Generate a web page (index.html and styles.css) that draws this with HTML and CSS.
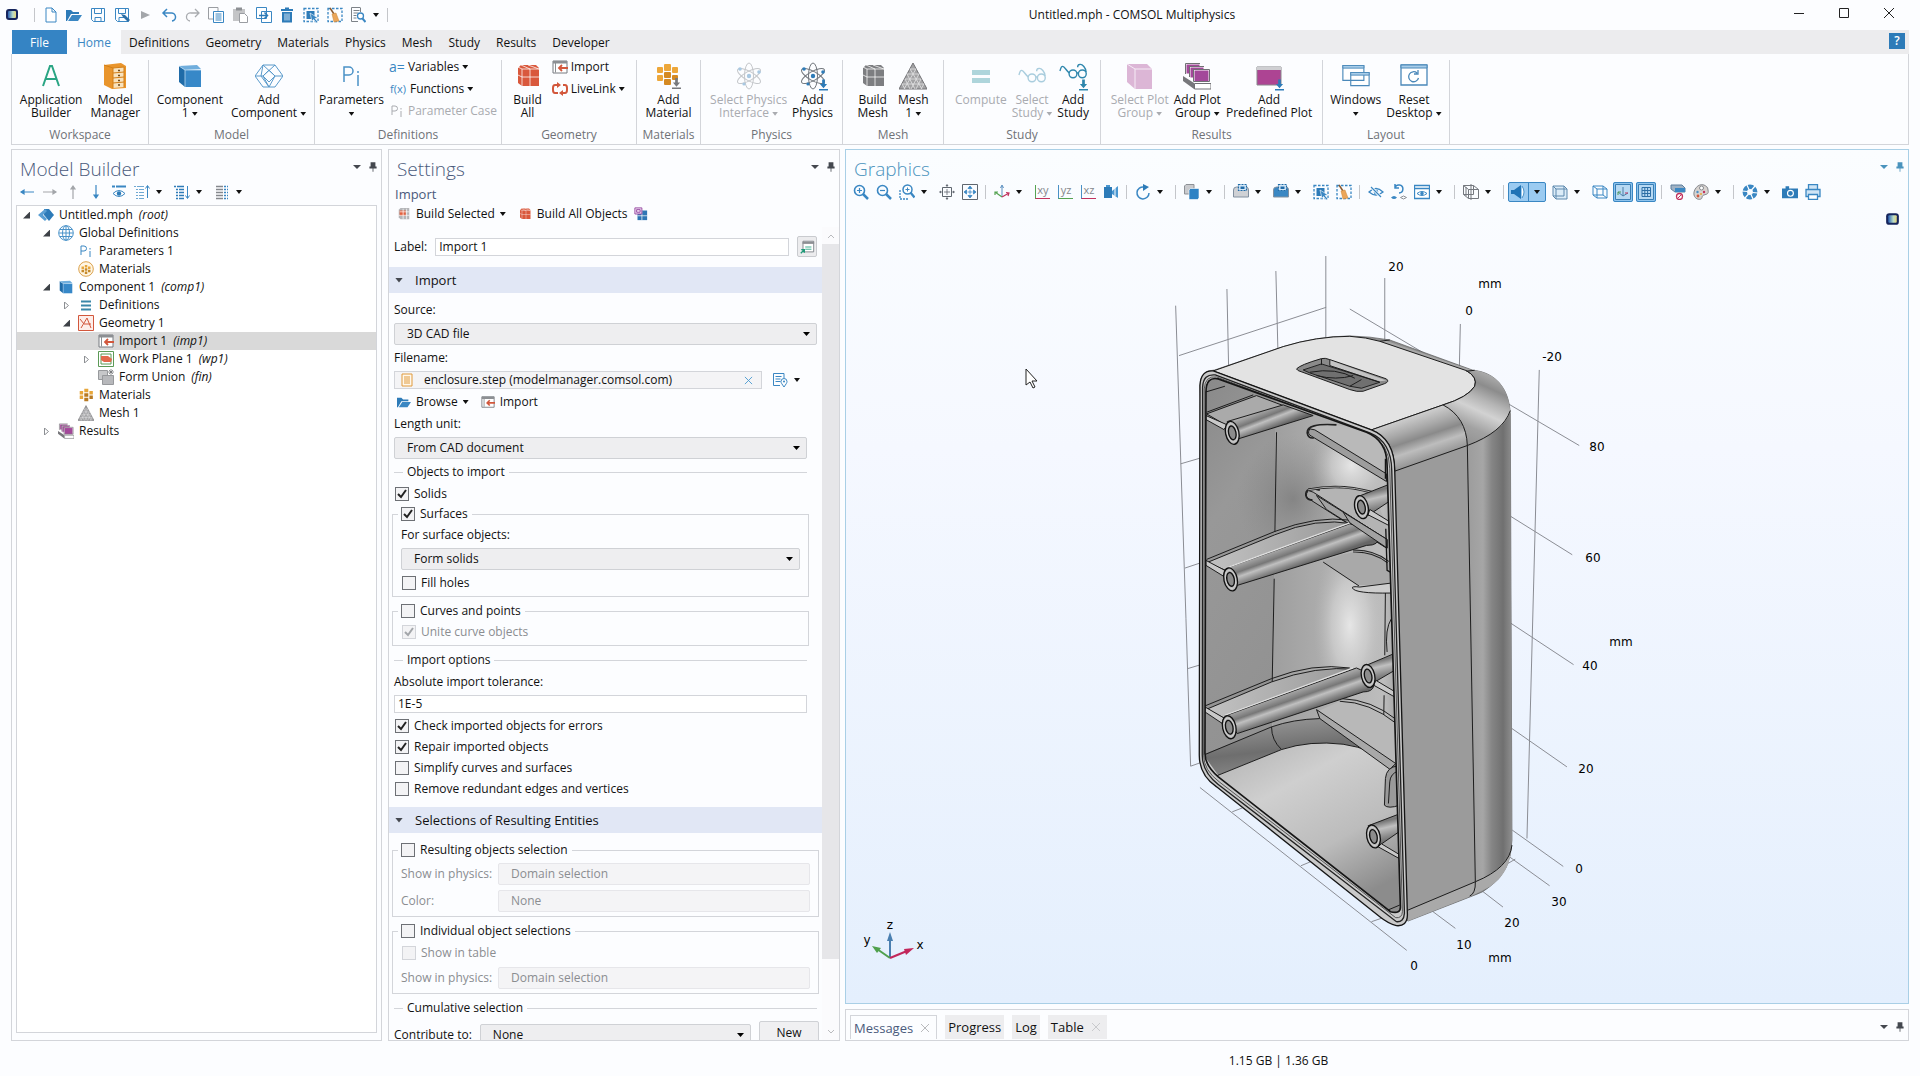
FILE: index.html
```html
<!doctype html>
<html lang="en">
<head>
    <meta charset="utf-8">
    <meta name="viewport" content="width=device-width, initial-scale=1">
    <title>Untitled.mph - COMSOL Multiphysics</title>
    <link rel="stylesheet" href="styles.css">
</head>
<body>

<!-- Icon sprite -->
<svg class="sprite" aria-hidden="true">
    <defs>
        <linearGradient id="logo-fill" x1="0" x2="1"><stop offset="0" stop-color="#2b62b5"/><stop offset=".6" stop-color="#b9dcc8"/><stop offset="1" stop-color="#e8d67a"/></linearGradient>
    </defs>
    <symbol id="i-logo" viewBox="0 0 16 16"><rect x="2" y="2" width="12" height="11" rx="3" fill="#16255c"/><rect x="4" y="4" width="8" height="7" rx="1" fill="url(#logo-fill)"/></symbol>
    <symbol id="i-new" viewBox="0 0 16 16"><path d="M3 1h6l4 4v10H3zM9 1v4h4" fill="#fff" stroke="#3a87c3"/></symbol>
    <symbol id="i-open" viewBox="0 0 16 16"><path d="M0 3h5l2 2h6v2H5L1 14H0z" fill="#2d7bb8"/><path d="M6 8h10l-4 6H2z" fill="#3a87c3"/></symbol>
    <symbol id="i-save" viewBox="0 0 16 16"><path d="M1.5 1.5h13v13h-11l-2-2zM4.500 1.500v5h7v-5M5 14.500v-4h6v4" fill="none" stroke="#3a87c3"/></symbol>
    <symbol id="i-saveas" viewBox="0 0 16 16"><path d="M1.500 1.500h13v13h-11l-2-2zM4.500 1.500v5h7v-5M5 14.500v-4h5" fill="none" stroke="#3a87c3"/><path d="M7 7l2 3 5 5 2-2-5-5z" fill="#2d6fa6"/></symbol>
    <symbol id="i-play" viewBox="0 0 16 16"><path d="M4 4l9 4-9 4z" fill="#a3a6aa"/></symbol>
    <symbol id="i-undo" viewBox="0 0 16 16"><path d="M2 6h8a4 4 0 0 1 1 8M6 2L2 6l4 4" fill="none" stroke="#3a87c3" stroke-width="1.500"/></symbol>
    <symbol id="i-redo" viewBox="0 0 16 16"><path d="M14 6H6a4 4 0 0 0-1 8M10 2l4 4-4 4" fill="none" stroke="#a9acb0" stroke-width="1.300"/></symbol>
    <symbol id="i-copy" viewBox="0 0 16 16"><path d="M5 12H.500V.500H10V4" fill="none" stroke="#9a9da2"/><path d="M5.500 4.500h10v11h-10zM7.500 7h6M7.500 9h6M7.500 11h6M7.500 13h6" fill="#fff" stroke="#3a87c3"/></symbol>
    <symbol id="i-paste" viewBox="0 0 16 16"><path d="M1 2h12v12H1z" fill="#c4c5c7"/><path d="M4 .500h6v3H4z" fill="#8c8f93"/><path d="M7.500 6.500h5l3 3v6h-8z" fill="#fff" stroke="#9a9da2"/></symbol>
    <symbol id="i-dup" viewBox="0 0 16 16"><path d="M.500.500h10v11H.500zM5.500 4.500h10v11h-10z" fill="#fff" stroke="#3a87c3"/><path d="M3 8.500h8M8.500 5.500l3 3-3 3" fill="none" stroke="#2d7bb8" stroke-width="1.500"/></symbol>
    <symbol id="i-trash" viewBox="0 0 16 16"><path d="M2 2h4V.500h4V2h4v2H2zM3 5h10v10.500H3z" fill="#2d7bb8"/><path d="M6 6.500v7M8 6.500v7M10 6.500v7" stroke="#cfe2f2"/></symbol>
    <symbol id="i-select" viewBox="0 0 16 16"><path d="M1 1.500h14v13H1z" fill="none" stroke="#3a87c3" stroke-width="1.300" stroke-dasharray="2.500 1.500"/><path d="M3.500 4h8v8h-8z" fill="#2d7bb8"/><path d="M7 6l8 5-3 .500 3 3.500-1.500 1-3-3.500-1.500 2z" fill="#3a87c3" stroke="#fff" stroke-width=".600"/></symbol>
    <symbol id="i-clear" viewBox="0 0 16 16"><path d="M1 1.500h14v13H1z" fill="none" stroke="#3a87c3" stroke-width="1.300" stroke-dasharray="2.500 1.500"/><path d="M3 1l4 6" stroke="#8a5a30" stroke-width="1.500"/><path d="M5 7l4-1 3 8-5 1z" fill="#eba65a" stroke="#c98436" stroke-width=".500"/></symbol>
    <symbol id="i-find" viewBox="0 0 16 16"><path d="M10 .500H1.500v14H8M3.500 3.500h6M3.500 6h5M3.500 8.500h3M3.500 11h3M10.500.500V5" fill="none" stroke="#7d8288"/><circle cx="10.500" cy="9" r="3" fill="#fff" stroke="#3a87c3" stroke-width="1.300"/><path d="M12.500 11.500l3 3.500" stroke="#3a87c3" stroke-width="2"/></symbol>

    <symbol id="i-app" viewBox="0 0 28 28"><path d="M6 24L13 4h2l7 20M9 17h10" fill="none" stroke="#2aa584" stroke-width="2"/></symbol>
    <symbol id="i-manager" viewBox="0 0 28 28"><path d="M3 3l17-2 5 3v22l-14 1-8-4z" fill="#e9952c"/><path d="M12 6l11-1v20l-11 1z" fill="#f8e2bd"/><path d="M12 11l11-1M12 16l11-1M12 21l11-1M12 6v20M23 5v20M3 3l9 3 11-1" fill="none" stroke="#d37f17"/><path d="M17 8.500h2M17 13.500h2M17 18.500h2M17 23h2" stroke="#6b4a1c" stroke-width="1.500"/></symbol>
    <symbol id="i-component" viewBox="0 0 28 28"><path d="M3 4l18-1 4 4-16 1z" fill="#70aedd"/><path d="M3 4l6 4v17l-6-5z" fill="#1f6ba8"/><path d="M9 8h16v17H9z" fill="#3788c8"/><path d="M3 4l6 4h16M9 8v17" fill="none" stroke="#b9daf2" stroke-width=".800"/></symbol>
    <symbol id="i-addcomp" viewBox="0 0 28 28"><path d="M8 3h12l8 11-8 11H8L0 14zM8 3l12 11M8 3l-2 11 8 11M20 3L8 14H0M20 14h8M20 14l-6 11M8 14l6 11M14 8l6 6-6 6-6-6z" fill="none" stroke="#5a9acb" stroke-width="1"/></symbol>
    <symbol id="i-pi" viewBox="0 0 28 28"><path d="M7 20V5h5a4 4 0 0 1 0 8H7" fill="none" stroke="#4a91c6" stroke-width="1.500"/><path d="M21 13v11M21 9v2" stroke="#4a91c6" stroke-width="1.500"/></symbol>
    <symbol id="i-pis" viewBox="0 0 16 16"><path d="M3 12V3h3a2 2 0 0 1 0 5H3M12 8v6M12 5v1.500" fill="none" stroke="currentColor"/></symbol>
    <symbol id="i-cube" viewBox="0 0 28 28"><path d="M4 6l3-3h15l3 3v18H8l-4-3z" fill="currentColor"/><path d="M8 7h17M8 7v17M8 7L4 5M8 15h17M16 7v17M4 13l4 2M7 3l9 4M14 3l11 4" fill="none" stroke="#fff" stroke-opacity=".750" stroke-width="1"/></symbol>
    <symbol id="i-import" viewBox="0 0 16 16"><path d="M1 2h14v12H1z" fill="#fff" stroke="#777b80"/><path d="M1 2h14v2.500H1zM3 4.500h1v9H3z" fill="#8c8f93"/><path d="M16 9H7M10 6L7 9l3 3" fill="none" stroke="#d2573c" stroke-width="1.800"/></symbol>
    <symbol id="i-link" viewBox="0 0 16 16"><path d="M6 4H3Q1 4 1 7v2q0 3 2 3h3M10 12h3q2 0 2-3V7q0-3-2-3h-2" fill="none" stroke="#d2573c" stroke-width="2"/><path d="M5 1l4 3-4 3zM11 9l-4 3 4 3z" fill="#d2573c"/></symbol>
    <symbol id="i-material" viewBox="0 0 28 28"><g fill="#eda73a"><rect x="3" y="5" width="6" height="6" rx="1"/><rect x="10" y="2" width="7" height="7" rx="1"/><rect x="18" y="5" width="6" height="6" rx="1"/><rect x="3" y="13" width="6" height="6" rx="1"/></g><g fill="#d58a22"><rect x="10" y="10" width="7" height="6" rx="1"/><rect x="18" y="13" width="6" height="5" rx="1"/><rect x="10" y="17" width="7" height="6" rx="1"/></g></symbol>
    <symbol id="i-matsmall" viewBox="0 0 28 28"><g fill="#e7a63a"><path d="M3 7h6v6H3zM11 3h7v6h-7zM20 7h6v6h-6zM3 15h6v6H3z"/></g><g fill="#b87a22"><path d="M11 11h7v6h-7zM20 15h6v6h-6zM11 19h7v6h-7z"/></g></symbol>
    <symbol id="i-matring" viewBox="0 0 16 16"><circle cx="8" cy="8" r="7.300" fill="#fff6e4" stroke="#dba14b"/><path d="M3.500 5.500h2.500v2.500H3.500zM6.800 4h2.500v2.500H6.800zM10 5.500h2.500v2.500H10z" fill="#e7a63a"/><path d="M3.500 8.800h2.500v2.500H3.500zM6.800 7.300h2.500v2.500H6.800zM10 8.800h2.500v2.500H10zM6.800 10.500h2.500V13H6.800z" fill="#c58a2b"/></symbol>
    <symbol id="i-atom" viewBox="0 0 28 28"><g fill="none" stroke="#73787e" stroke-width="1"><ellipse cx="14" cy="14" rx="4.500" ry="13"/><ellipse cx="14" cy="14" rx="4.500" ry="13" transform="rotate(60 14 14)"/><ellipse cx="14" cy="14" rx="4.500" ry="13" transform="rotate(-60 14 14)"/></g><g fill="#2d7bb8"><circle cx="14" cy="14" r="2.200"/><circle cx="5" cy="7" r="1.800"/><circle cx="24" cy="10" r="1.800"/><circle cx="9" cy="22" r="1.600"/></g></symbol>
    <symbol id="i-down" viewBox="0 0 10 12"><path d="M3.500 0h3v5H9L5 9.500 1 5h2.500zM0 10.500h10V12H0z" fill="currentColor"/></symbol>
    <symbol id="i-mesh" viewBox="0 0 28 28"><path d="M14 1L28 27H0z" fill="#a3a3a5" stroke="#737376"/><path d="M11 7h6M8 12h12M6 17h16M3 22h22M11 7l12 20M8 12l8 15M6 17l5 10M3 22l3 5M17 7L5 27M20 12l-8 15M22 17l-5 10M25 22l-3 5" fill="none" stroke="#e3e3e5" stroke-width=".800"/></symbol>
    <symbol id="i-equals" viewBox="0 0 28 28"><path d="M5 8h18v5H5zM5 16h18v5H5z" fill="#3b9aa8"/></symbol>
    <symbol id="i-glasses" viewBox="0 0 30 20"><g fill="none" stroke="#2f87ad" stroke-width="1.500"><circle cx="15" cy="12" r="4.200"/><circle cx="25" cy="12" r="4.200"/><path d="M11 11C8 9 6 4 4 4S2 6 1 9M29 10c0-4-4-9-7-8-2 0-2 3-2 3M19 11h2"/></g></symbol>
    <symbol id="i-plotcube" viewBox="0 0 28 28"><path d="M1 2h20l5 5v20H9L1 20z" fill="#ad4f9b"/><path d="M1 2l8 5h17M9 7v20" fill="none" stroke="#eed3ea"/></symbol>
    <symbol id="i-plots" viewBox="0 0 28 28"><g fill="#a3489a" stroke="#fff"><path d="M3 2h14v10H3z"/><path d="M7 5h14v11H7z"/><path d="M11 8h15v12H11z"/></g><path d="M2.500 1.500H17M2.500 1.500V12M6.500 4.500H21M6.500 4.500V15M10.500 7.500h16v12h-16z" fill="none" stroke="#707074"/><path d="M0 14l11 7v6L0 19z" fill="#77777b"/><path d="M11.500 21.500H28V27H11.500z" fill="#fff" stroke="#707074"/></symbol>
    <symbol id="i-predef" viewBox="0 0 28 28"><path d="M2 5h24v18H2z" fill="#ad4493" stroke="#88888c"/><path d="M2 5h24v3H2z" fill="#cfcfd2"/></symbol>
    <symbol id="i-windows" viewBox="0 0 32 28"><path d="M1 2h24v17H1zM10 10h21v15H10z" fill="#fff" stroke="#4a88b9" stroke-width="1.300"/><path d="M1 2h24v3H1zM10 10h21v3H10z" fill="#a8cde9" stroke="#4a88b9"/></symbol>
    <symbol id="i-reset" viewBox="0 0 28 28"><path d="M1 3h26v20H1z" fill="#fff" stroke="#4a88b9" stroke-width="1.300"/><path d="M1 3h26v3H1z" fill="#a8cde9" stroke="#4a88b9"/><path d="M18.500 16a5 5 0 1 1-1.500-5M18 8v4h-4" fill="none" stroke="#4a88b9" stroke-width="1.300"/></symbol>

    <symbol id="i-arrl" viewBox="0 0 16 16"><path d="M2 8h13M5 6v4L2 8z" fill="currentColor" stroke="currentColor" stroke-width="1.200"/></symbol>
    <symbol id="i-eye" viewBox="0 0 16 16"><path d="M1 2.500h14" stroke="#3a87c3" stroke-width="2" stroke-dasharray="3 1 12"/><path d="M2 9.500q6-6 12 0-6 6-12 0z" fill="#fff" stroke="#3a87c3"/><circle cx="8" cy="9.500" r="2.200" fill="#2d7bb8"/></symbol>
    <symbol id="i-listup" viewBox="0 0 16 16"><path d="M0 2.500h10M2 5.500h8M2 8.500h8M2 11.500h8M2 14.500h8" stroke="#6fa8d2" stroke-dasharray="2 1 9"/><path d="M13.500 14V2M11.500 4.500l2-3 2 3" fill="none" stroke="#3a87c3"/></symbol>
    <symbol id="i-listdown" viewBox="0 0 16 16"><path d="M0 2.500h10M2 5.500h8M2 8.500h8M2 11.500h8M2 14.500h8" stroke="#2d7bb8" stroke-width="1.500" stroke-dasharray="2 1 9"/><path d="M13.500 2v12M11.500 11.500l2 3 2-3" fill="none" stroke="#3a87c3"/></symbol>
    <symbol id="i-list" viewBox="0 0 16 16"><path d="M2 2.500h7M2 5.500h7M2 8.500h7M2 11.500h7M2 14.500h7" stroke="#85888d" stroke-width="1.500"/><path d="M10 2.500h4M10 5.500h4M10 8.500h4M10 11.500h4M10 14.500h4" stroke="#3a87c3" stroke-width="1.500" stroke-dasharray="2 1 2"/></symbol>
    <symbol id="i-root" viewBox="0 0 16 16"><path d="M6 2l5 0 5 6-5 6-5-6z" fill="#2d7bb8"/><path d="M7 2L0 8l7 6 2-2-4-4 4-4z" fill="#5a9fd3"/></symbol>
    <symbol id="i-globe" viewBox="0 0 16 16"><g fill="none" stroke="#4b93c9"><circle cx="8" cy="8" r="7.300"/><ellipse cx="8" cy="8" rx="3.500" ry="7.300"/><path d="M8 1v14M1 8h14M2 4.500h12M2 11.500h12"/></g></symbol>
    <symbol id="i-defs" viewBox="0 0 16 16"><path d="M3 4.500h10M3 8.500h10M3 12.500h10" stroke="#3a87a8" stroke-width="2"/></symbol>
    <symbol id="i-geom" viewBox="0 0 16 16"><path d="M.500.500h15v15H.500z" fill="#fdeeea" stroke="#d2573c"/><path d="M3 13L9 3l4 10M2 4l4 5h7" fill="none" stroke="#d2573c"/></symbol>
    <symbol id="i-plane" viewBox="0 0 16 16"><path d="M.500.500h15v15H.500zM3 3h10v10H3z" fill="#fff" stroke="#5c9a56"/><path d="M3 5l7 0 4 3-1 3-7 0-3-2z" fill="#e2674b"/></symbol>
    <symbol id="i-union" viewBox="0 0 16 16"><path d="M.500 1.500h9v9h-9z" fill="#c6c7c9" stroke="#97999c"/><path d="M4.500 6.500h11v9h-11z" fill="#b7b8bb" stroke="#97999c"/><path d="M13 0v6M10 3h6M11 1l4 4M15 1l-4 4" stroke="#66686c" stroke-width=".700"/></symbol>
    <symbol id="i-buildsel" viewBox="0 0 16 16"><path d="M2 3l2-2h10v13H4l-2-2z" fill="#b4b5b8"/><path d="M3 4h7v6H3z" fill="#e2603f"/><path d="M2 9.500h12M7 2v12M11 2v12M3 5.500h11" stroke="#fff" stroke-opacity=".800" fill="none"/></symbol>
    <symbol id="i-buildmulti" viewBox="0 0 16 16"><path d="M4 4h11v11H4z" fill="#2f76b4"/><path d="M9 4v11M4 10h11" stroke="#fff" stroke-opacity=".800"/><path d="M1 1h8v7H1zM3 3h4v3H3z" fill="#f3dff3" stroke="#8f3f9c"/></symbol>
    <symbol id="i-form" viewBox="0 0 18 18"><path d="M4.500 2.500h12v12h-12z" fill="#fff" stroke="#7d8288"/><path d="M4 3h13v2.500H4z" fill="#8c8f93"/><path d="M7 9h7M7 11.500h7" stroke="#2aa584"/><path d="M2 16l4-4M2.500 12H6v3.500" stroke="#1f9a78" stroke-width="1.500" fill="none"/></symbol>
    <symbol id="i-doc" viewBox="0 0 12 14"><path d="M1 1h10v12H1z" fill="#fff8ec" stroke="#e09a3c"/><path d="M3 4h6M3 6h6M3 8h6M3 10h6" stroke="#e09a3c"/></symbol>
    <symbol id="i-docpin" viewBox="0 0 16 16"><path d="M12 6V1.500H1.500v12H8M3.500 4.500h6M3.500 7h5M3.500 9.500h5" fill="none" stroke="#3a87c3"/><path d="M12 15c-2-3-3-4-3-5.500a3 3 0 0 1 6 0c0 1.500-1 2.500-3 5.500z" fill="#fff" stroke="#3a87c3"/><circle cx="12" cy="9.500" r="1" fill="#3a87c3"/></symbol>
    <symbol id="i-pin" viewBox="0 0 10 12"><path d="M2 0h6v5.500h1.500V8h-4v4h-1V8H.500V5.500H2z" fill="currentColor"/></symbol>

    <symbol id="i-zoomin" viewBox="0 0 16 16"><circle cx="6.500" cy="6.500" r="5" fill="none" stroke="#3a87c3" stroke-width="1.600"/><path d="M10 10l5 5" stroke="#3a87c3" stroke-width="2.500"/><path d="M4 6.500h5M6.500 4v5" stroke="#3a87c3" stroke-width="1.200"/></symbol>
    <symbol id="i-zoomout" viewBox="0 0 16 16"><circle cx="6.500" cy="6.500" r="5" fill="none" stroke="#3a87c3" stroke-width="1.600"/><path d="M10 10l5 5" stroke="#3a87c3" stroke-width="2.500"/><path d="M4 6.500h5" stroke="#3a87c3" stroke-width="1.200"/></symbol>
    <symbol id="i-zoombox" viewBox="0 0 16 16"><path d="M1 6v9h9" fill="none" stroke="#3a87c3" stroke-width="1.300" stroke-dasharray="2 1"/><circle cx="8.500" cy="5.500" r="4.500" fill="#fff" stroke="#3a87c3" stroke-width="1.500"/><path d="M11.500 8.500l4 5" stroke="#3a87c3" stroke-width="2.300"/><path d="M6.500 5.500h4M8.500 3.500v4" stroke="#3a87c3"/></symbol>
    <symbol id="i-center" viewBox="0 0 16 16"><path d="M3.500 3.500h9v9h-9z" fill="none" stroke="#5f666e"/><path d="M8 5v6M5 8h6M7 2L8 .500 9 2zM7 14l1 1.500L9 14zM2 7L.500 8 2 9zM14 7l1.500 1L14 9z" fill="#5f666e" stroke="#5f666e" stroke-width=".800"/></symbol>
    <symbol id="i-extents" viewBox="0 0 16 16"><path d="M.500.500h15v15H.500z" fill="none" stroke="#5f666e"/><path d="M8 5.500v5M5.500 8h5M6 4.500L8 2l2 2.500zM6 11.500L8 14l2-2.500zM4.500 6L2 8l2.500 2zM11.500 6L14 8l-2.500 2z" fill="#3a87c3" stroke="#3a87c3" stroke-width=".800"/></symbol>
    <symbol id="i-axes" viewBox="0 0 16 16"><path d="M8 13V2M6.500 4L8 1l1.500 3" fill="none" stroke="#5a8fc0"/><path d="M8 13L1 8M1 11V8h3" fill="none" stroke="#55a352" stroke-width="1.200"/><path d="M8 13l7-4M12 8.500l3 .500-1 3" fill="none" stroke="#c2325e" stroke-width="1.200"/></symbol>
    <symbol id="i-cam" viewBox="0 0 16 16"><path d="M1 3h8v11H1z" fill="#2d7bb8"/><path d="M3 1h4v2H3zM9 7l6-5v12L9 10z" fill="#4a97d0"/><path d="M12 4v8" stroke="#fff"/></symbol>
    <symbol id="i-rotate" viewBox="0 0 16 16"><path d="M14 9a6 6 0 1 1-5-6" fill="none" stroke="#3a87c3" stroke-width="1.500"/><path d="M8 0l6 3-6 4z" fill="#2d7bb8"/></symbol>
    <symbol id="i-cubes" viewBox="0 0 16 16"><path d="M.500 2L2 .500h8v8L9 10H.500z" fill="#c9cacd" stroke="#8e9196"/><path d="M5 6l1.500-1.500H15V14l-1.500 1.500H5z" fill="#2d82c4" stroke="#fff" stroke-width=".600"/></symbol>
    <symbol id="i-boxsel" viewBox="0 0 16 16"><path d="M.500 6q0-3 3-3H13q2.500 0 2.500 3v7H.500z" fill="currentColor" stroke="#8290a0"/><path d="M5.500.500h8v6h-8z" fill="#d5e8f7" stroke="#1f6ba8" stroke-width="1.200" stroke-dasharray="2 1"/><path d="M7.500 2.500h4v2.500h-4z" fill="#1f6ba8"/></symbol>
    <symbol id="i-hide" viewBox="0 0 16 16"><path d="M1 8q7-7 14 0-7 6-14 0z" fill="none" stroke="#3a87c3" stroke-width="1.300"/><circle cx="8" cy="8" r="2.300" fill="#3a87c3"/><path d="M3 3l10 10" stroke="#fff" stroke-width="3"/><path d="M3 3l10 10" stroke="#3a87c3" stroke-width="1.300"/></symbol>
    <symbol id="i-rehide" viewBox="0 0 16 16"><path d="M4 4a4 4 0 1 1 4 5M4 0v4h4" fill="none" stroke="#3a87c3" stroke-width="1.500"/><path d="M0 13.500q3-3 6 0-3 3-6 0z" fill="#3a87c3"/><path d="M9.500 13.500q3-3 6 0-3 3-6 0z" fill="none" stroke="#8e9196"/></symbol>
    <symbol id="i-winview" viewBox="0 0 16 16"><path d="M.500 1.500h15v13H.500zM.500 4.500h15" fill="#fff" stroke="#3a87c3" stroke-width="1.300"/><path d="M3 9.500q5-4 10 0-5 4-10 0z" fill="#fff" stroke="#3a87c3"/><circle cx="8" cy="9.500" r="1.700" fill="#3a87c3"/></symbol>
    <symbol id="i-wire" viewBox="0 0 16 16"><path d="M.500 1.500h10v9H.500zM5.500 5.500h10v9h-10zM.500 1.500l5 4M10.500 1.500l5 4M.500 10.500l5 4M8 0v16M3 3v9" fill="none" stroke="#74787e"/></symbol>
    <symbol id="i-light" viewBox="0 0 16 16"><path d="M0 6h3l7-5v14l-7-5H0z" fill="#2173b5"/><path d="M11 2q4 6 0 12" fill="#fff" stroke="#4a91c6"/></symbol>
    <symbol id="i-transp" viewBox="0 0 16 16"><path d="M1 2h11v10H1zM4 5h11v10H4z" fill="#dcecf8" stroke="#5c88ad"/><path d="M1 2l3 3M12 2l3 3M1 12l3 3" stroke="#5c88ad"/></symbol>
    <symbol id="i-wirebox" viewBox="0 0 16 16"><path d="M1 2h10v9H1zM5 5h10v9H5zM1 2l4 3M11 2l4 3M1 11l4 3M11 11l4 3" fill="none" stroke="#3a87c3"/></symbol>
    <symbol id="i-axisbtn" viewBox="0 0 16 16"><path d="M.500.500h15v15H.500z" fill="#b7d9f3" stroke="#3a7fb5"/><path d="M8 12V3M8 12L3 8M8 12l5-3" stroke="#4b7fa8"/><path d="M3 8v3M3 8h3" stroke="#4f9a58"/><path d="M13 9h-3" stroke="#c2325e"/></symbol>
    <symbol id="i-grid" viewBox="0 0 16 16"><path d="M.500.500h15v15H.500z" fill="#b7d9f3" stroke="#3a7fb5"/><path d="M4 3.500h8.500v9H4zM4 6.500h8.500M4 9.500h8.500M6.800 3.500v9M9.600 3.500v9" fill="none" stroke="#2d6fa6"/></symbol>
    <symbol id="i-nomat" viewBox="0 0 16 16"><path d="M1 1h11l3 3v4H5L1 5z" fill="#9fb2c4" stroke="#5f7f9c"/><path d="M5 4h10v4H5z" fill="#3a87c3"/><circle cx="9.500" cy="12.500" r="3" fill="#fff" stroke="#c2325e" stroke-width="1.300"/><path d="M7.500 14.500l4-4" stroke="#c2325e"/></symbol>
    <symbol id="i-palette" viewBox="0 0 16 16"><path d="M11 1C5-1 0 6 1 11c1 4 5 5 7 4s0-3 3-4 5-1 4-5c0-3-2-4-4-5z" fill="#d8d3d0" stroke="#85888d"/><circle cx="8.500" cy="4" r="2" fill="#fff" stroke="#85888d"/><circle cx="4.500" cy="8" r="1.200" fill="#4a91c6"/><circle cx="5" cy="12" r="1.400" fill="#d2573c"/><circle cx="11" cy="8" r="1.200" fill="#c2325e"/><circle cx="8" cy="10" r="1" fill="#e7a63a"/></symbol>
    <symbol id="i-shutter" viewBox="0 0 16 16"><circle cx="8" cy="8" r="5.200" fill="none" stroke="#3a87c3" stroke-width="4.500"/><path d="M4.500 0L7 5.500M13 2L9.500 6M16 9l-5.500-.500M11.500 16L9 10.500M3 14l3.500-4M0 7l5.500.500" stroke="#fff" stroke-width="1.200"/></symbol>
    <symbol id="i-photo" viewBox="0 0 18 16"><path d="M0 4h4V1.500h4V4h10v11H0z" fill="#2d7bb8"/><circle cx="9.500" cy="9.500" r="3.300" fill="#2d7bb8" stroke="#fff" stroke-width="1.300"/></symbol>
    <symbol id="i-print" viewBox="0 0 16 16"><path d="M3.500 5V.500h9V5M1 5.500h14v7H1z" fill="#cfe4f5" stroke="#3a87c3" stroke-width="1.300"/><path d="M3.500 10.500h9v5h-9z" fill="#fff" stroke="#3a87c3" stroke-width="1.300"/></symbol>
</svg>

<!-- Title bar -->
<header class="titlebar">
    <div class="quick">
        <svg class="icon logo"><use href="#i-logo"/></svg>
        <span class="bar"></span>
        <button aria-label="New"><svg class="icon"><use href="#i-new"/></svg></button>
        <button aria-label="Open"><svg class="icon"><use href="#i-open"/></svg></button>
        <button aria-label="Save"><svg class="icon"><use href="#i-save"/></svg></button>
        <button aria-label="Save as"><svg class="icon"><use href="#i-saveas"/></svg></button>
        <button aria-label="Run"><svg class="icon"><use href="#i-play"/></svg></button>
        <button aria-label="Undo"><svg class="icon"><use href="#i-undo"/></svg></button>
        <button aria-label="Redo"><svg class="icon"><use href="#i-redo"/></svg></button>
        <button aria-label="Copy"><svg class="icon"><use href="#i-copy"/></svg></button>
        <button aria-label="Paste"><svg class="icon"><use href="#i-paste"/></svg></button>
        <button aria-label="Duplicate"><svg class="icon"><use href="#i-dup"/></svg></button>
        <button aria-label="Delete"><svg class="icon"><use href="#i-trash"/></svg></button>
        <button aria-label="Select box"><svg class="icon"><use href="#i-select"/></svg></button>
        <button aria-label="Clear selection"><svg class="icon"><use href="#i-clear"/></svg></button>
        <button aria-label="Find"><svg class="icon"><use href="#i-find"/></svg></button>
        <i class="caret"></i>
        <span class="bar"></span>
    </div>
    <h1 class="window-title">Untitled.mph - COMSOL Multiphysics</h1>
    <div class="window-buttons">
        <button aria-label="Minimize"><svg viewBox="0 0 12 12"><path d="M1 6.500h10" stroke="#222"/></svg></button>
        <button aria-label="Maximize"><svg viewBox="0 0 12 12"><path d="M1.500 1.500h9v9h-9z" fill="none" stroke="#222"/></svg></button>
        <button aria-label="Close"><svg viewBox="0 0 12 12"><path d="M1 1l10 10M11 1L1 11" stroke="#222"/></svg></button>
    </div>
</header>

<!-- Ribbon tabs -->
<nav class="tabs">
    <a class="tab tab-file" href="#">File</a>
    <a class="tab tab-active" href="#">Home</a>
    <a class="tab" href="#">Definitions</a>
    <a class="tab" href="#">Geometry</a>
    <a class="tab" href="#">Materials</a>
    <a class="tab" href="#">Physics</a>
    <a class="tab" href="#">Mesh</a>
    <a class="tab" href="#">Study</a>
    <a class="tab" href="#">Results</a>
    <a class="tab" href="#">Developer</a>
    <button class="help">?</button>
</nav>

<!-- Ribbon -->
<div class="ribbon">
    <section class="group g-workspace">
        <div class="group-body">
            <button class="big"><svg><use href="#i-app"/></svg><span>Application<br>Builder</span></button>
            <button class="big"><svg><use href="#i-manager"/></svg><span>Model<br>Manager</span></button>
        </div>
        <h2>Workspace</h2>
    </section>
    <section class="group g-model">
        <div class="group-body">
            <button class="big"><svg><use href="#i-component"/></svg><span>Component<br>1 <i class="caret"></i></span></button>
            <button class="big"><svg><use href="#i-addcomp"/></svg><span>Add<br>Component <i class="caret"></i></span></button>
        </div>
        <h2>Model</h2>
    </section>
    <section class="group g-definitions">
        <div class="group-body">
            <button class="big"><svg><use href="#i-pi"/></svg><span>Parameters<br><i class="caret"></i></span></button>
            <div class="stack">
                <button class="small"><b class="glyph">a=</b>Variables <i class="caret"></i></button>
                <button class="small"><b class="glyph glyph-fx">f(x)</b>Functions <i class="caret"></i></button>
                <button class="small" disabled><svg class="icon"><use href="#i-pis"/></svg>Parameter Case</button>
            </div>
        </div>
        <h2>Definitions</h2>
    </section>
    <section class="group g-geometry">
        <div class="group-body">
            <button class="big"><svg class="red"><use href="#i-cube"/></svg><span>Build<br>All</span></button>
            <div class="stack">
                <button class="small"><svg class="icon"><use href="#i-import"/></svg>Import</button>
                <button class="small"><svg class="icon"><use href="#i-link"/></svg>LiveLink <i class="caret"></i></button>
            </div>
        </div>
        <h2>Geometry</h2>
    </section>
    <section class="group g-materials">
        <div class="group-body">
            <button class="big"><svg><use href="#i-material"/><use href="#i-down" x="18" y="16" width="9" height="11" color="#77797d"/></svg><span>Add<br>Material</span></button>
        </div>
        <h2>Materials</h2>
    </section>
    <section class="group g-physics">
        <div class="group-body">
            <button class="big" disabled><svg><use href="#i-atom"/></svg><span>Select Physics<br>Interface <i class="caret"></i></span></button>
            <button class="big"><svg><use href="#i-atom"/><use href="#i-down" x="20" y="17" width="9" height="12" color="#2d7bb8"/></svg><span>Add<br>Physics</span></button>
        </div>
        <h2>Physics</h2>
    </section>
    <section class="group g-mesh">
        <div class="group-body">
            <button class="big"><svg class="gray"><use href="#i-cube"/></svg><span>Build<br>Mesh</span></button>
            <button class="big"><svg><use href="#i-mesh"/></svg><span>Mesh<br>1 <i class="caret"></i></span></button>
        </div>
        <h2>Mesh</h2>
    </section>
    <section class="group g-study">
        <div class="group-body">
            <button class="big" disabled><svg><use href="#i-equals"/></svg><span>Compute</span></button>
            <button class="big" disabled><svg><use href="#i-glasses"/></svg><span>Select<br>Study <i class="caret"></i></span></button>
            <button class="big"><svg><use href="#i-glasses" y="-4"/><use href="#i-down" x="20" y="17" width="9" height="12" color="#2f87ad"/></svg><span>Add<br>Study</span></button>
        </div>
        <h2>Study</h2>
    </section>
    <section class="group g-results">
        <div class="group-body">
            <button class="big" disabled><svg><use href="#i-plotcube"/></svg><span>Select Plot<br>Group <i class="caret"></i></span></button>
            <button class="big"><svg><use href="#i-plots"/></svg><span>Add Plot<br>Group <i class="caret"></i></span></button>
            <button class="big"><svg><use href="#i-predef"/><use href="#i-down" x="20" y="17" width="9" height="12" color="#2d7bb8"/></svg><span>Add<br>Predefined Plot</span></button>
        </div>
        <h2>Results</h2>
    </section>
    <section class="group g-layout">
        <div class="group-body">
            <button class="big"><svg><use href="#i-windows"/></svg><span>Windows<br><i class="caret"></i></span></button>
            <button class="big"><svg><use href="#i-reset"/></svg><span>Reset<br>Desktop <i class="caret"></i></span></button>
        </div>
        <h2>Layout</h2>
    </section>
</div>

<main class="workspace">

    <!-- Model Builder -->
    <section class="panel builder">
        <div class="panel-head">
            <h2>Model Builder</h2>
            <i class="caret"></i>
            <svg class="pin"><use href="#i-pin"/></svg>
        </div>
        <div class="toolbar">
            <button class="blue" aria-label="Previous node"><svg class="icon"><use href="#i-arrl"/></svg></button>
            <button class="muted" aria-label="Next node"><svg class="icon turn-right"><use href="#i-arrl"/></svg></button>
            <button class="muted" aria-label="Move up"><svg class="icon turn-up"><use href="#i-arrl"/></svg></button>
            <button class="blue" aria-label="Move down"><svg class="icon turn-down"><use href="#i-arrl"/></svg></button>
            <button aria-label="Show"><svg class="icon"><use href="#i-eye"/></svg></button>
            <button aria-label="Collapse"><svg class="icon"><use href="#i-listup"/></svg></button><i class="caret"></i>
            <button aria-label="Expand"><svg class="icon"><use href="#i-listdown"/></svg></button><i class="caret"></i>
            <button aria-label="Node text"><svg class="icon"><use href="#i-list"/></svg></button><i class="caret"></i>
        </div>
        <ul class="tree">
            <li class="lv0 open"><svg class="icon"><use href="#i-root"/></svg>Untitled.mph <em>(root)</em></li>
            <li class="lv1 open"><svg class="icon"><use href="#i-globe"/></svg>Global Definitions</li>
            <li class="lv2"><svg class="icon blue"><use href="#i-pis"/></svg>Parameters 1</li>
            <li class="lv2"><svg class="icon"><use href="#i-matring"/></svg>Materials</li>
            <li class="lv1 open"><svg class="icon"><use href="#i-component"/></svg>Component 1 <em>(comp1)</em></li>
            <li class="lv2 closed"><svg class="icon"><use href="#i-defs"/></svg>Definitions</li>
            <li class="lv2 open"><svg class="icon"><use href="#i-geom"/></svg>Geometry 1</li>
            <li class="lv3 selected"><svg class="icon"><use href="#i-import"/></svg>Import 1 <em>(imp1)</em></li>
            <li class="lv3 closed"><svg class="icon"><use href="#i-plane"/></svg>Work Plane 1 <em>(wp1)</em></li>
            <li class="lv3"><svg class="icon"><use href="#i-union"/></svg>Form Union <em>(fin)</em></li>
            <li class="lv2"><svg class="icon"><use href="#i-matsmall"/></svg>Materials</li>
            <li class="lv2"><svg class="icon"><use href="#i-mesh"/></svg>Mesh 1</li>
            <li class="lv1 closed"><svg class="icon"><use href="#i-plots"/></svg>Results</li>
        </ul>
    </section>

    <!-- Settings -->
    <section class="panel settings">
        <div class="panel-head">
            <h2>Settings</h2>
            <i class="caret"></i>
            <svg class="pin"><use href="#i-pin"/></svg>
        </div>
        <p class="subtitle">Import</p>
        <div class="actions">
            <button><svg class="icon"><use href="#i-buildsel"/></svg>Build Selected <i class="caret"></i></button>
            <button><svg class="icon red"><use href="#i-cube"/></svg>Build All Objects</button>
            <button aria-label="Build preceding"><svg class="icon"><use href="#i-buildmulti"/></svg></button>
        </div>
        <div class="scroller">
            <form class="form">
                <div class="label-row">
                    <label for="node-label">Label:</label>
                    <input type="text" id="node-label" value="Import 1">
                    <button type="button" class="icon-button" aria-label="Edit label"><svg><use href="#i-form"/></svg></button>
                </div>

                <h3>Import</h3>
                <div class="rows">
                    <label for="source">Source:</label>
                    <select id="source" class="wide"><option>3D CAD file</option></select>
                    <label for="filename">Filename:</label>
                    <div class="file-row">
                        <div class="file">
                            <svg><use href="#i-doc"/></svg>
                            <input type="text" id="filename" value="enclosure.step (modelmanager.comsol.com)" readonly>
                            <button type="button" aria-label="Clear"><svg viewBox="0 0 10 10"><path d="M1 1l8 8M9 1L1 9" stroke="#4a9ad0"/></svg></button>
                        </div>
                        <svg class="icon"><use href="#i-docpin"/></svg>
                        <i class="caret"></i>
                    </div>
                    <div class="actions browse">
                        <button type="button"><svg class="icon"><use href="#i-open"/></svg>Browse <i class="caret"></i></button>
                        <button type="button"><svg class="icon"><use href="#i-import"/></svg>Import</button>
                    </div>
                    <label for="unit">Length unit:</label>
                    <select id="unit"><option>From CAD document</option></select>
                    <h4>Objects to import</h4>
                    <label class="check"><input type="checkbox" checked>Solids</label>
                    <fieldset class="after-check">
                        <legend><label class="check"><input type="checkbox" checked>Surfaces</label></legend>
                        <label for="surface">For surface objects:</label>
                        <select id="surface"><option>Form solids</option></select>
                        <label class="check"><input type="checkbox">Fill holes</label>
                    </fieldset>
                    <fieldset>
                        <legend><label class="check"><input type="checkbox">Curves and points</label></legend>
                        <label class="check off"><input type="checkbox" checked disabled>Unite curve objects</label>
                    </fieldset>
                    <h4>Import options</h4>
                    <label for="tolerance">Absolute import tolerance:</label>
                    <input type="text" id="tolerance" value="1E-5">
                    <div class="checks">
                        <label class="check"><input type="checkbox" checked>Check imported objects for errors</label>
                        <label class="check"><input type="checkbox" checked>Repair imported objects</label>
                        <label class="check"><input type="checkbox">Simplify curves and surfaces</label>
                        <label class="check"><input type="checkbox">Remove redundant edges and vertices</label>
                    </div>
                </div>

                <h3>Selections of Resulting Entities</h3>
                <div class="rows rows-wide">
                    <fieldset>
                        <legend><label class="check"><input type="checkbox">Resulting objects selection</label></legend>
                        <div class="field off"><label for="show1">Show in physics:</label><select id="show1" disabled><option>Domain selection</option></select></div>
                        <div class="field off"><label for="color">Color:</label><select id="color" disabled><option>None</option></select></div>
                    </fieldset>
                    <fieldset>
                        <legend><label class="check"><input type="checkbox">Individual object selections</label></legend>
                        <label class="check off"><input type="checkbox" disabled>Show in table</label>
                        <div class="field off"><label for="show2">Show in physics:</label><select id="show2" disabled><option>Domain selection</option></select></div>
                    </fieldset>
                    <h4>Cumulative selection</h4>
                    <div class="contribute">
                        <label for="contribute">Contribute to:</label>
                        <select id="contribute"><option>None</option></select>
                        <button type="button">New</button>
                    </div>
                </div>
            </form>
            <div class="scrollbar">
                <svg viewBox="0 0 10 6"><path d="M2 5l3-3 3 3" fill="none" stroke="#b9babd"/></svg>
                <span class="thumb"></span>
                <svg viewBox="0 0 10 6"><path d="M2 1l3 3 3-3" fill="none" stroke="#b9babd"/></svg>
            </div>
        </div>
    </section>

    <div class="column">

        <!-- Graphics -->
        <section class="panel graphics">
            <div class="panel-head">
                <h2>Graphics</h2>
                <i class="caret"></i>
                <svg class="pin"><use href="#i-pin"/></svg>
            </div>
            <div class="toolbar">
                <button aria-label="Zoom in"><svg class="icon"><use href="#i-zoomin"/></svg></button>
                <button aria-label="Zoom out"><svg class="icon"><use href="#i-zoomout"/></svg></button>
                <button aria-label="Zoom box"><svg class="icon"><use href="#i-zoombox"/></svg></button><i class="caret"></i>
                <button aria-label="Zoom to selection"><svg class="icon"><use href="#i-center"/></svg></button>
                <button aria-label="Zoom extents"><svg class="icon"><use href="#i-extents"/></svg></button>
                <span class="bar"></span>
                <button aria-label="Go to view"><svg class="icon"><use href="#i-axes"/></svg></button><i class="caret"></i>
                <button class="plane plane-xy">xy</button>
                <button class="plane plane-yz">yz</button>
                <button class="plane plane-xz">xz</button>
                <button aria-label="Projection"><svg class="icon"><use href="#i-cam"/></svg></button>
                <span class="bar"></span>
                <button aria-label="Rotate"><svg class="icon"><use href="#i-rotate"/></svg></button><i class="caret"></i>
                <span class="bar"></span>
                <button aria-label="Select objects"><svg class="icon"><use href="#i-cubes"/></svg></button><i class="caret"></i>
                <span class="bar"></span>
                <button class="light" aria-label="Select mode"><svg class="icon"><use href="#i-boxsel"/></svg></button><i class="caret"></i>
                <button class="blue" aria-label="Deselect mode"><svg class="icon"><use href="#i-boxsel"/></svg></button><i class="caret"></i>
                <button aria-label="Select box"><svg class="icon"><use href="#i-select"/></svg></button>
                <button aria-label="Clear selection"><svg class="icon"><use href="#i-clear"/></svg></button>
                <span class="bar"></span>
                <button aria-label="Hide"><svg class="icon"><use href="#i-hide"/></svg></button>
                <button aria-label="Reset hiding"><svg class="icon"><use href="#i-rehide"/></svg></button>
                <button aria-label="View hidden"><svg class="icon"><use href="#i-winview"/></svg></button><i class="caret"></i>
                <span class="bar"></span>
                <button aria-label="Clipping"><svg class="icon"><use href="#i-wire"/></svg></button><i class="caret"></i>
                <span class="bar"></span>
                <span class="split"><button class="on" aria-label="Scene light"><svg class="icon"><use href="#i-light"/></svg></button><i class="caret"></i></span>
                <button aria-label="Transparency"><svg class="icon"><use href="#i-transp"/></svg></button><i class="caret"></i>
                <button aria-label="Wireframe"><svg class="icon"><use href="#i-wirebox"/></svg></button>
                <button class="on" aria-label="Show axes"><svg class="icon"><use href="#i-axisbtn"/></svg></button>
                <button class="on" aria-label="Show grid"><svg class="icon"><use href="#i-grid"/></svg></button>
                <span class="bar"></span>
                <button aria-label="Material rendering"><svg class="icon"><use href="#i-nomat"/></svg></button>
                <button aria-label="Colors"><svg class="icon"><use href="#i-palette"/></svg></button><i class="caret"></i>
                <span class="bar"></span>
                <button aria-label="Environment"><svg class="icon"><use href="#i-shutter"/></svg></button><i class="caret"></i>
                <button aria-label="Snapshot"><svg class="icon"><use href="#i-photo"/></svg></button>
                <button aria-label="Print"><svg class="icon"><use href="#i-print"/></svg></button>
            </div>

            <!-- Enclosure geometry with its coordinate box -->
            <svg class="canvas" viewBox="846 203 1062 799" role="img" aria-label="Enclosure geometry">
                <defs>
                    <linearGradient id="side" x1="0" x2="1"><stop offset="0" stop-color="#9c9c9c"/><stop offset=".350" stop-color="#a6a6a6"/><stop offset=".550" stop-color="#858585"/><stop offset=".800" stop-color="#707070"/><stop offset="1" stop-color="#8e8e8e"/></linearGradient>
                    <linearGradient id="roundtop" gradientUnits="userSpaceOnUse" x1="770" y1="355" x2="815" y2="490"><stop offset="0" stop-color="#cfcfcf"/><stop offset=".300" stop-color="#a8a8a8"/><stop offset=".500" stop-color="#8a8a8a"/><stop offset=".720" stop-color="#bdbdbd"/><stop offset="1" stop-color="#949494"/></linearGradient>
                    <linearGradient id="corner" gradientUnits="userSpaceOnUse" x1="960" y1="430" x2="1050" y2="235"><stop offset="0" stop-color="#959595"/><stop offset=".200" stop-color="#a2a2a2"/><stop offset=".450" stop-color="#d2d2d2"/><stop offset=".620" stop-color="#b4b4b4"/><stop offset=".800" stop-color="#8c8c8c"/><stop offset="1" stop-color="#b0b0b0"/></linearGradient>
                    <linearGradient id="wall-left" x1="0" y1="0" x2=".300" y2="1"><stop offset="0" stop-color="#888"/><stop offset=".400" stop-color="#989898"/><stop offset="1" stop-color="#929292"/></linearGradient>
                    <linearGradient id="wall-back" x1="0" x2="1"><stop offset="0" stop-color="#9e9e9e"/><stop offset=".400" stop-color="#adadad"/><stop offset=".850" stop-color="#bdbdbd"/><stop offset="1" stop-color="#9c9c9c"/></linearGradient>
                    <radialGradient id="glow"><stop offset="0" stop-color="#e6e6e6"/><stop offset=".500" stop-color="#d2d2d2" stop-opacity=".700"/><stop offset="1" stop-color="#b5b5b5" stop-opacity="0"/></radialGradient>
                    <radialGradient id="shade"><stop offset="0" stop-color="#777" stop-opacity=".700"/><stop offset="1" stop-color="#888" stop-opacity="0"/></radialGradient>
                    <linearGradient id="floor" x1="0" y1="0" x2=".600" y2="1"><stop offset="0" stop-color="#b0b0b0"/><stop offset=".350" stop-color="#cfcfcf"/><stop offset=".700" stop-color="#bcbcbc"/><stop offset="1" stop-color="#8c8c8c"/></linearGradient>
                    <linearGradient id="tube" x1="0" y1="0" x2=".250" y2="1"><stop offset="0" stop-color="#aaa"/><stop offset=".350" stop-color="#777"/><stop offset=".550" stop-color="#c0c0c0"/><stop offset=".800" stop-color="#8c8c8c"/><stop offset="1" stop-color="#666"/></linearGradient>
                    <linearGradient id="tube-top" href="#tube" gradientUnits="userSpaceOnUse" x1="316" y1="343" x2="338" y2="400"/>
                    <linearGradient id="tube-mid" href="#tube" gradientUnits="userSpaceOnUse" x1="415" y1="741" x2="438" y2="806"/>
                    <linearGradient id="tube-low" href="#tube" gradientUnits="userSpaceOnUse" x1="420" y1="1180" x2="443" y2="1246"/>
                    <linearGradient id="shelf" x1="0" x2="1"><stop offset="0" stop-color="#c2c2c2"/><stop offset="1" stop-color="#999"/></linearGradient>
                    <linearGradient id="fillet" x1="0" y1="0" x2=".300" y2="1"><stop offset="0" stop-color="#a0a0a0"/><stop offset=".500" stop-color="#6e6e6e"/><stop offset="1" stop-color="#9a9a9a"/></linearGradient>
                    <clipPath id="opening"><path d="M168 280Q168 232 205 240L650 400Q712 425 712 500L752 1825Q753 1848 722 1840L205 1435Q165 1400 165 1365Z"/></clipPath>
                    <g id="boss"><ellipse rx="20" ry="35" fill="#b5b5b5" stroke="#111" stroke-width="4" transform="rotate(-12)"/><ellipse rx="15" ry="28" fill="none" stroke="#dcdcdc" stroke-width="2" transform="rotate(-12)"/><ellipse rx="11" ry="21" fill="#8c8c8c" stroke="#111" stroke-width="4" transform="rotate(-12)"/></g>
                </defs>

                <!-- drawn at three times the size, then scaled back -->
                <g transform="translate(1150 300) scale(.333)">
                    <path class="gridline" d="M77 20L108 960 122 1403M231-30L236 200M378-84L384 150M528-129V120M705-63V125M932 75L929 205M87 170L529 25M92 495L150 478M105 808L150 793M113 1110L150 1099M122 1403L150 1393M600 30L835 170M1169 213L1132 1620M1078 316L1289 440M1082 652L1268 768M1084 974L1272 1098M1087 1290L1252 1405M1088 1595L1241 1704M150 1467L771 1956M247 1540L278 1528M453 1702L482 1690M665 1870L700 1858M1075 1672L1200 1762M1060 1704L1097 1682M990 1772L1060 1826M850 1840L917 1890"/>

                    <!-- body -->
                    <path d="M150 260Q152 213 195 213L400 143Q500 112 600 111 660 112 720 123L970 214C1035 220 1078 265 1082 345L1087 1625Q1085 1720 1020 1765 1000 1783 970 1792L775 1868 690 1800 200 1400Z" fill="#8f8f8f" stroke="#555" stroke-width="2"/>
                    <path d="M700 122L965 213 950 217 690 127Z" fill="#a8a8a8"/>
                    <path class="edge" d="M190 216L400 143Q500 112 600 112 650 115 690 127L950 215Q985 235 975 262 955 295 880 318L665 393Z" fill="#e3e3e3"/>
                    <path d="M665 393L880 318Q950 355 953 440L735 517Q735 420 665 393Z" fill="url(#roundtop)"/>
                    <path d="M880 318Q955 295 975 262 985 235 950 215L970 214C1035 220 1078 265 1082 340Q1060 400 953 440 945 350 880 318Z" fill="url(#corner)"/>
                    <path d="M735 517L953 440 977 1750 775 1835Z" fill="#9b9b9b"/>
                    <path d="M953 440Q1060 400 1082 340L1087 1625Q1085 1705 977 1750Z" fill="url(#side)"/>
                    <path d="M775 1835L977 1750Q1075 1708 1085 1650 1080 1725 1020 1765L965 1793 775 1868Z" fill="#a9a9a9"/>
                    <path class="edge" fill="none" d="M665 393L880 318Q955 295 975 262 985 235 950 215M665 393Q735 420 735 517L953 440Q1060 400 1082 335M880 318Q950 355 953 440L977 1750Q978 1785 960 1793M775 1835L977 1750Q1080 1708 1087 1640M690 127L720 123M950 217L975 214"/>

                    <!-- window in the top face -->
                    <path class="edge" d="M440 210Q450 198 515 179 525 176 540 182L710 240Q720 248 705 254L640 277Q622 280 600 272L445 215Z" fill="#8a8a8a"/>
                    <path d="M460 213L515 195 690 250 635 268 600 262 480 222Z" fill="#707070" stroke="#222" stroke-width="3"/>
                    <path d="M540 200L690 247 710 245 540 184Z" fill="#c4c4c4"/>
                    <path class="edge" fill="none" d="M480 220Q560 205 615 238M500 230Q560 245 610 230M600 262L635 242M515 180V198M540 183V200M540 200L690 250"/>

                    <!-- front rim -->
                    <path d="M150 260Q152 213 190 216L665 393Q735 420 735 517L773 1850Q772 1885 740 1882 715 1875 690 1855L200 1465Q148 1430 148 1370Z" fill="#c9c9c9" stroke="#151515" stroke-width="4"/>
                    <path d="M158 265Q160 224 196 228L660 402Q725 428 726 515L764 1845Q762 1872 740 1870L205 1458Q157 1420 157 1370Z" fill="none" stroke="#222" stroke-width="4"/>
                    <path d="M163 270Q165 230 200 234L655 404Q719 430 720 510L758 1840Q757 1860 738 1858L208 1450Q161 1415 161 1370Z" fill="none" stroke="#555" stroke-width="3"/>

                    <!-- inside -->
                    <g clip-path="url(#opening)">
                        <path d="M150 220H380L367 1290 160 1370Z" fill="url(#wall-left)"/>
                        <path d="M380 220H760V1420L367 1290Z" fill="url(#wall-back)"/>
                        <ellipse cx="430" cy="600" rx="170" ry="190" fill="url(#shade)"/>
                        <ellipse cx="605" cy="500" rx="120" ry="130" fill="url(#glow)"/>
                        <ellipse cx="600" cy="980" rx="110" ry="260" fill="url(#glow)"/>
                        <path d="M160 1368L365 1285Q430 1262 510 1260L740 1400V1480L395 1353 205 1430Z" fill="url(#fillet)"/>
                        <path class="edge" d="M200 1432L395 1353Q480 1325 580 1337 670 1350 725 1400L760 1500V1850H720Z" fill="url(#floor)"/>
                        <path class="edge" fill="none" d="M380 400L375 700M373 840L367 1150M365 1285Q365 1325 395 1353M165 1368L365 1285Q430 1262 510 1260M707 870L705 1070M703 1190L702 1250M725 960Q705 990 712 1060"/>

                        <!-- right-hand ribs -->
                        <path d="M480 385Q530 372 600 385L710 440V530L490 395Z" fill="#b9b9b9"/>
                        <path class="edge" d="M495 393L710 525V548L485 412Q470 405 480 390Z" fill="#9d9d9d"/>
                        <path d="M560 378Q470 372 472 402 475 420 492 417" fill="none" stroke="#222" stroke-width="5"/>
                        <path d="M475 573Q570 553 670 580L715 690V740L490 590Z" fill="#b4b4b4"/>
                        <path class="edge" d="M490 580L710 722V748L480 602Q462 595 475 575Z" fill="#a5a5a5"/>
                        <path d="M510 574Q465 562 468 590 472 605 488 603" fill="none" stroke="#222" stroke-width="5"/>
                        <path d="M475 573Q570 553 665 580" fill="none" stroke="#222" stroke-width="8"/>
                        <path d="M475 573Q570 553 665 580" fill="none" stroke="#aaa" stroke-width="3"/>
                        <path d="M520 790Q600 750 660 760L720 795V855L625 860Z" fill="#a9a9a9"/>
                        <path class="edge" fill="none" d="M520 790L628 862"/>
                        <path d="M610 757Q670 755 715 790" fill="none" stroke="#222" stroke-width="9"/>
                        <path d="M610 757Q670 755 715 790" fill="none" stroke="#aaa" stroke-width="3"/>
                        <path class="edge" d="M725 853L630 865Q605 862 608 868 615 885 725 883Z" fill="#cdcdcd"/>
                        <path d="M570 1208Q660 1210 740 1275V1400L500 1240Z" fill="#b8b8b8"/>
                        <path class="edge" fill="none" d="M570 1208Q660 1210 740 1275M575 1200Q665 1203 740 1263"/>
                        <path class="edge" d="M500 1233L738 1395 720 1412 510 1260Z" fill="#a8a8a8"/>

                        <!-- top left boss -->
                        <path class="edge" d="M170 345L320 290 400 320 230 380Z" fill="#aaa"/>
                        <path class="edge" d="M232 368L400 318 490 350 262 421Z" fill="url(#tube-top)"/>
                        <path class="edge" d="M168 350L232 378 222 392 168 362Z" fill="#c9c9c9"/>
                        <path class="edge" fill="none" d="M165 280L225 262M170 340L310 288"/>
                        <use href="#boss" x="247" y="402"/>

                        <!-- middle shelf -->
                        <path class="edge" d="M500 590L712 722V748L530 632Z" fill="#a2a2a2"/>
                        <path class="edge" d="M170 792L375 708Q500 655 610 675L228 815Z" fill="url(#shelf)"/>
                        <path class="edge" fill="none" d="M170 782L375 698Q500 650 600 664"/>
                        <path class="edge" d="M230 808L600 675Q660 690 685 715 690 740 650 740L262 860Z" fill="url(#tube-mid)"/>
                        <path d="M228 808L600 672" stroke="#e0e0e0" stroke-width="4"/>
                        <path class="edge" d="M168 785L225 815 220 832 168 800Z" fill="#c9c9c9"/>
                        <use href="#boss" x="242" y="842"/>
                        <path class="edge" d="M580 640L712 722V748L600 672Z" fill="#a2a2a2"/>

                        <!-- lower shelf -->
                        <path class="edge" d="M170 1232L365 1150Q500 1100 620 1112L225 1260Z" fill="url(#shelf)"/>
                        <path class="edge" fill="none" d="M165 1222L365 1140Q490 1092 600 1108"/>
                        <path class="edge" d="M225 1252L620 1108Q680 1130 672 1160 670 1180 640 1180L262 1305Z" fill="url(#tube-low)"/>
                        <path d="M225 1250L610 1108" stroke="#e0e0e0" stroke-width="4"/>
                        <path class="edge" d="M165 1225L222 1258 216 1274 165 1240Z" fill="#c9c9c9"/>
                        <use href="#boss" x="238" y="1286"/>

                        <!-- right bosses -->
                        <path class="edge" d="M628 592L730 552V600L655 650Z" fill="url(#tube)"/>
                        <path class="edge" d="M660 632L725 672V684L655 648Z" fill="#c9c9c9"/>
                        <use href="#boss" x="635" y="625"/>
                        <path class="edge" d="M645 1102L740 1062V1112L672 1152Z" fill="url(#tube)"/>
                        <path class="edge" d="M678 1145L740 1182V1198L672 1160Z" fill="#c9c9c9"/>
                        <use href="#boss" x="655" y="1132"/>
                        <path class="edge" d="M655 1582L755 1544V1595L690 1640Z" fill="url(#tube)"/>
                        <path class="edge" d="M695 1636L755 1672V1684L685 1645Z" fill="#c9c9c9"/>
                        <use href="#boss" x="671" y="1614"/>
                        <path class="edge" d="M745 1402Q710 1405 707 1440L704 1520Q715 1532 750 1520Z" fill="#9a9a9a"/>
                        <path class="edge" fill="none" d="M745 1418Q722 1425 720 1450L716 1515M712 1836L750 1820"/>
                    </g>
                    <path d="M168 280Q168 232 205 240L650 400Q712 425 712 500L752 1825Q753 1848 722 1840L205 1435Q165 1400 165 1365Z" fill="none" stroke="#151515" stroke-width="5"/>
                    <path d="M707 480V540M708 690L712 815 722 820" fill="none" stroke="#151515" stroke-width="4"/>
                </g>

                <g class="axis-text">
                    <text x="1396" y="272">20</text><text x="1490" y="289">mm</text><text x="1469" y="316">0</text><text x="1552" y="362">-20</text>
                    <text x="1597" y="452">80</text><text x="1593" y="563">60</text><text x="1621" y="647">mm</text><text x="1590" y="671">40</text>
                    <text x="1586" y="774">20</text><text x="1579" y="874">0</text><text x="1559" y="907">30</text><text x="1512" y="928">20</text>
                    <text x="1464" y="950">10</text><text x="1500" y="963">mm</text><text x="1414" y="971">0</text>
                    <text x="890" y="930">z</text><text x="867" y="945">y</text><text x="920" y="950">x</text>
                </g>

                <!-- orientation triad -->
                <path d="M890 959V938" stroke="#4a7fb0" stroke-width="2"/><path d="M887 942L890 933 893 942Z" fill="#4a7fb0"/>
                <path d="M890 959L877 950" stroke="#4fa04c" stroke-width="2"/><path d="M872 947L881 949 877 954Z" fill="#4fa04c"/>
                <path d="M890 959L907 952" stroke="#c2265a" stroke-width="2"/><path d="M914 949L904 950 906 956Z" fill="#c2265a"/>

                <!-- pointer -->
                <path d="M1026 370V386L1030 383 1033 389 1035 388 1032 382H1037Z" fill="#fff" stroke="#222"/>
                <use href="#i-logo" x="1884" y="212" width="17" height="17"/>
            </svg>
        </section>

        <!-- Output tabs -->
        <section class="output">
            <a class="out-tab out-active" href="#">Messages <svg viewBox="0 0 10 10"><path d="M1 1l8 8M9 1L1 9" stroke="#b9babd"/></svg></a>
            <a class="out-tab" href="#">Progress</a>
            <a class="out-tab" href="#">Log</a>
            <a class="out-tab" href="#">Table <svg viewBox="0 0 10 10"><path d="M1 1l8 8M9 1L1 9" stroke="#c9cacd"/></svg></a>
            <i class="caret"></i>
            <svg class="pin"><use href="#i-pin"/></svg>
        </section>
    </div>
</main>

<footer class="status"><span>1.15 GB | 1.36 GB</span></footer>

</body>
</html>
```

FILE: styles.css
```css
*, *::before, *::after {
    box-sizing: border-box;
}

:root {
    --page-bg: #fcfdff;
    --text: #111;
    --text-off: #8b8d91;
    --line: #d3d5da;
    --blue: #3a87c3;
    --title: #4a5a7c;
    --section-bg: #e1e7f5;
    --red: #d9583c;
}

body {
    margin: 0;
    height: 100vh;
    display: flex;
    flex-direction: column;
    overflow: hidden;
    background: var(--page-bg);
    color: var(--text);
    font: 12px/18px "Open Sans", "Noto Sans", sans-serif;
}

h1, h2, h3, h4, p, ul, form {
    margin: 0;
    padding: 0;
    font-weight: 400;
    font-size: 12px;
}

button, input, select {
    font: inherit;
    color: inherit;
}

button {
    padding: 0;
    border: 0;
    background: none;
    white-space: nowrap;
}

a {
    color: inherit;
    text-decoration: none;
}

svg {
    overflow: visible;
    flex: none;
}

.sprite {
    position: absolute;
    width: 0;
    height: 0;
}

.icon {
    width: 16px;
    height: 16px;
}

.blue { color: var(--blue); }
.muted { color: #a3a6aa; }
.light { color: #cfd1d5; }
.red { color: var(--red); }
.gray { color: #7d7e81; }
.off { color: var(--text-off); }

/* Drop-down triangle */
.caret {
    display: inline-block;
    flex: none;
    width: 6px;
    height: 4px;
    background: currentColor;
    clip-path: polygon(0 0, 100% 0, 50% 100%);
    vertical-align: middle;
}

.bar {
    flex: none;
    width: 1px;
    height: 14px;
    background: #c4c6ca;
}

/* Title bar */
.titlebar {
    display: flex;
    align-items: center;
    height: 30px;
    flex: none;
}

.quick {
    display: flex;
    align-items: center;
    width: 392px;
    padding-left: 4px;
}

.quick button {
    display: flex;
    justify-content: center;
    width: 24px;
}

.quick .bar {
    margin: 0 4px 0 14px;
}

.quick .caret {
    margin-left: 3px;
}

.quick .caret + .bar {
    margin-left: 8px;
}

.window-title {
    flex: 1;
    padding-left: 96px;
    text-align: center;
    font-size: 12px;
}

.window-buttons {
    display: flex;
    margin-right: 9px;
}

.window-buttons button {
    width: 45px;
    height: 28px;
}

.window-buttons svg {
    width: 12px;
    height: 12px;
}

/* Ribbon tabs */
.tabs {
    display: flex;
    flex: none;
    height: 24px;
    margin: 0 11px 0 12px;
    background: #ececee;
}

.tab {
    padding: 0 8px;
    line-height: 25px;
}

.tab-file {
    padding: 0 18px;
    background: #3584c4;
    color: #fff;
}

.tab-active {
    padding: 0 10px;
    background: var(--page-bg);
    color: var(--blue);
}

.help {
    width: 16px;
    height: 16px;
    margin: 3px 4px 0 auto;
    background: #2d7bb8;
    color: #fff;
    font-weight: 600;
    line-height: 16px;
}

/* Ribbon */
.ribbon {
    display: flex;
    flex: none;
    height: 91px;
    margin: 0 11px;
    border: 1px solid var(--line);
    border-top: 0;
}

.group {
    display: flex;
    flex-direction: column;
    height: 84px;
    margin-top: 6px;
    border-right: 1px solid var(--line);
}

.group-body {
    display: flex;
    flex: 1;
    justify-content: center;
    gap: 10px;
}

.group h2 {
    color: #6f7277;
    text-align: center;
    line-height: 18px;
}

.g-workspace { width: 137px; }
.g-model { width: 166px; }
.g-definitions { width: 187px; }
.g-geometry { width: 135px; }
.g-materials { width: 64px; }
.g-physics { width: 142px; }
.g-mesh { width: 101px; }
.g-study { width: 157px; }
.g-results { width: 222px; }
.g-layout { width: 127px; }

.g-workspace .group-body,
.g-model .group-body { gap: 8px; }
.g-results .group-body,
.g-physics .group-body,
.g-definitions .group-body,
.g-study .group-body,
.g-layout .group-body { gap: 5px; }

.big {
    display: flex;
    flex-direction: column;
    align-items: center;
    gap: 3px;
    padding-top: 2px;
    line-height: 13px;
}

.big svg {
    width: 28px;
    height: 28px;
}

.big[disabled],
.small[disabled] {
    color: #a9abb0;
}

.big[disabled] svg {
    opacity: .4;
}

.stack {
    display: flex;
    flex-direction: column;
    margin-top: -4px;
}

.small {
    display: flex;
    align-items: center;
    gap: 3px;
    height: 22px;
}

.glyph {
    width: 16px;
    color: var(--blue);
    font-size: 14px;
    font-weight: 400;
}

.glyph-fx {
    font-size: 11px;
    width: 18px;
}

/* Main area */
.workspace {
    display: grid;
    grid-template-columns: 371px 452px minmax(0, 1fr);
    gap: 6px;
    flex: 1;
    min-height: 0;
    padding: 4px 11px 0;
}

.panel {
    display: flex;
    flex-direction: column;
    min-height: 0;
    border: 1px solid var(--line);
}

.panel-head {
    display: flex;
    align-items: center;
    gap: 8px;
    height: 34px;
    flex: none;
    padding: 0 4px 0 8px;
    color: #44484f;
}

.panel-head h2 {
    flex: 1;
    padding-top: 4px;
    color: var(--title);
    font-size: 19px;
    font-weight: 300;
    line-height: 34px;
}

.panel-head .caret,
.output .caret {
    width: 8px;
}

.pin {
    width: 8px;
    height: 10px;
}

.toolbar {
    display: flex;
    align-items: center;
    flex: none;
    height: 16px;
    padding-left: 3px;
}

.toolbar button {
    display: flex;
    flex: none;
    justify-content: center;
    align-items: center;
    width: 23px;
    height: 20px;
}

.toolbar .caret {
    margin: 0 8px 0 3px;
    color: #111;
}

.toolbar .bar {
    margin: 0 4px;
}

.turn-right { transform: rotate(180deg); }
.turn-up { transform: rotate(90deg); }
.turn-down { transform: rotate(-90deg); }

/* Model tree */
.tree {
    flex: 1;
    margin: 5px 4px 7px;
    border: 1px solid var(--line);
    background: #fff;
    list-style: none;
}

.tree li {
    display: flex;
    align-items: center;
    height: 18px;
}

.tree li::before {
    content: "";
    width: 7px;
    height: 7px;
    margin: 0 8px 0 6px;
}

.tree .icon {
    margin-right: 5px;
}

.tree em {
    margin-left: 6px;
}

.tree .open::before {
    background: #3d4147;
    clip-path: polygon(100% 0, 100% 100%, 0 100%);
}

.tree .closed::before {
    background: url("data:image/svg+xml,%3csvg xmlns='http://www.w3.org/2000/svg' viewBox='0 0 7 7'%3e%3cpath fill='none' stroke='%238c8f93' d='M1.500 0l4 3.500-4 3.500z'/%3e%3c/svg%3e");
}

.tree .selected { background: #d9d9d9; }
.tree .lv1 { padding-left: 20px; }
.tree .lv2 { padding-left: 40px; }
.tree .lv3 { padding-left: 60px; }

/* Settings */
.subtitle {
    padding-left: 6px;
    color: var(--title);
    font-size: 13px;
    line-height: 20px;
}

.actions {
    display: flex;
    align-items: center;
    flex: none;
    gap: 12px;
    height: 20px;
    padding-left: 8px;
}

.actions button {
    display: flex;
    align-items: center;
    gap: 5px;
}

.actions .icon {
    width: 14px;
    height: 14px;
}

.actions button + button:last-child {
    margin-left: -5px;
}

.actions.browse {
    height: 18px;
    padding-left: 3px;
}

.actions.browse button + button {
    margin-left: 0;
}

.scroller {
    display: flex;
    flex: 1;
    min-height: 0;
    margin-top: 3px;
    overflow: hidden;
}

.form {
    flex: 1;
    padding-top: 9px;
}

.label-row {
    display: flex;
    align-items: center;
    gap: 8px;
    height: 21px;
    margin-bottom: 10px;
    padding: 0 5px;
}

.label-row input {
    flex: 1;
}

.icon-button {
    display: flex;
    justify-content: center;
    align-items: center;
    width: 20px;
    height: 21px;
    border: 1px solid #c9cbcf;
    border-radius: 2px;
    background: #ececee;
}

.icon-button svg {
    width: 16px;
    height: 16px;
}

.form h3 {
    display: flex;
    align-items: center;
    gap: 12px;
    height: 26px;
    padding-left: 6px;
    background: var(--section-bg);
    font-size: 13px;
}

.form h3::before {
    content: "";
    width: 8px;
    height: 5px;
    background: #44484f;
    clip-path: polygon(0 0, 100% 0, 50% 100%);
}

.rows {
    display: flex;
    flex-direction: column;
    gap: 4px;
    padding: 8px 15px 9px 5px;
}

.rows-wide {
    padding-right: 5px;
}

.rows .wide {
    margin-right: -10px;
}

.form input[type="text"] {
    min-width: 0;
    height: 18px;
    padding: 0 3px;
    border: 1px solid var(--line);
    border-radius: 0;
    background: #fff;
}

select {
    height: 22px;
    padding: 0 12px;
    border: 1px solid #cfd1d5;
    border-radius: 2px;
    background: #eeeef0 url("data:image/svg+xml,%3csvg xmlns='http://www.w3.org/2000/svg' viewBox='0 0 7 4'%3e%3cpath d='M0 0h7L3.500 4z'/%3e%3c/svg%3e") no-repeat right 6px center / 7px 4px;
    appearance: none;
}

select:disabled {
    background: #f4f4f6;
    border-color: #e6e6ea;
    color: var(--text-off);
    opacity: 1;
}

.file-row {
    display: flex;
    align-items: center;
    gap: 6px;
}

.file {
    display: flex;
    align-items: center;
    width: 368px;
    height: 18px;
    margin-right: 4px;
    padding: 0 8px 0 6px;
    border: 1px solid var(--line);
    background: #f4f4f6;
}

.file svg {
    width: 12px;
    height: 14px;
}

.form .file input {
    flex: 1;
    height: 16px;
    padding: 0 0 0 11px;
    border: 0;
    background: none;
}

.file button svg {
    display: block;
    width: 9px;
    height: 9px;
}

.form h4 {
    display: flex;
    align-items: center;
    gap: 4px;
}

.form h4::before,
.form h4::after {
    content: "";
    width: 9px;
    height: 1px;
    background: var(--line);
}

.form h4::after {
    flex: 1;
}

.check {
    display: flex;
    align-items: center;
    gap: 5px;
    height: 18px;
}

.check input {
    width: 14px;
    height: 14px;
    margin: 0 0 0 1px;
    border: 1px solid #6d7075;
    background: #f3f3f5;
    appearance: none;
}

.check input:checked {
    background: #f3f3f5 url("data:image/svg+xml,%3csvg xmlns='http://www.w3.org/2000/svg' viewBox='0 0 12 12'%3e%3cpath fill='none' stroke='%23222' stroke-width='2' d='M2 6l3 3 5-7'/%3e%3c/svg%3e");
}

.check input:disabled {
    border-color: #d3d5da;
}

.check input:checked:disabled {
    background-image: url("data:image/svg+xml,%3csvg xmlns='http://www.w3.org/2000/svg' viewBox='0 0 12 12'%3e%3cpath fill='none' stroke='%23a3a6aa' stroke-width='2' d='M2 6l3 3 5-7'/%3e%3c/svg%3e");
}

.checks {
    display: flex;
    flex-direction: column;
    gap: 3px;
}

fieldset {
    display: flex;
    flex-direction: column;
    gap: 4px;
    min-width: 0;
    margin: 0 -2px 1px;
    padding: 3px 8px 4px;
    border: 1px solid var(--line);
}

.after-check {
    margin-top: -2px;
}

.rows-wide fieldset {
    gap: 5px;
    padding-top: 4px;
}

legend {
    margin-left: -3px;
    padding: 0 4px 0 3px;
}

legend .check input {
    margin-left: 0;
}

.field {
    display: flex;
    align-items: center;
}

.field label {
    width: 97px;
}

.field select {
    flex: 1;
}

.contribute {
    display: flex;
    align-items: center;
    gap: 8px;
    margin-right: -2px;
}

.contribute select {
    flex: 1;
}

.contribute button {
    width: 60px;
    height: 24px;
    margin-bottom: 4px;
    border: 1px solid #cfd1d5;
    border-radius: 2px;
    background: #f0f0f2;
}

.scrollbar {
    display: flex;
    flex-direction: column;
    align-items: center;
    width: 17px;
    background: #fbfbfd;
}

.scrollbar svg {
    width: 10px;
    height: 6px;
    margin: 6px 0 5px;
}

.thumb {
    flex: none;
    width: 17px;
    height: 88%;
    background: #e6e6e9;
}

.scrollbar .thumb + svg {
    margin-top: auto;
}

/* Graphics */
.column {
    display: flex;
    flex-direction: column;
    gap: 5px;
    min-height: 0;
    margin-left: -1px;
}

.graphics {
    flex: 1;
    border-color: #a9cfe6;
    background: linear-gradient(#fbfdff, #f5f8ff 35%, #e4effd);
}

.graphics .panel-head,
.graphics h2 {
    color: #4a93bd;
}

.plane {
    position: relative;
    color: #85888d;
    font-size: 11px;
}

.plane::after {
    content: "";
    position: absolute;
    inset: 3px 3px 3px 5px;
    border: solid #4a91c6;
    border-width: 0 0 1px 1px;
}

.toolbar .plane {
    padding: 0 0 4px 3px;
    line-height: 14px;
}

.plane-xy::after { border-color: #55a352 #55a352 #c2325e; }
.plane-yz::after { border-bottom-color: #55a352; }
.plane-xz::after { border-bottom-color: #c2325e; }

.toolbar .on {
    height: 20px;
    width: 20px;
    margin: 0 1px 0 2px;
    outline: 1px solid #3a87c3;
    outline-offset: -1px;
    border-radius: 2px;
    background: #8ec3ec;
}

.split {
    display: flex;
    align-items: center;
    width: 38px;
    margin-right: 2px;
    border: 1px solid #3a87c3;
    border-radius: 2px;
    background: #9bcbf1;
}

.toolbar .split .on {
    height: 18px;
    margin: 0;
    outline: 0;
    border-right: 1px solid #3a87c3;
    border-radius: 0;
    background: none;
}

.toolbar .split .caret {
    margin: 0 0 0 5px;
}

.canvas {
    flex: 1;
    min-height: 0;
    width: 100%;
    overflow: hidden;
}

.gridline {
    fill: none;
    stroke: #8b8d94;
    stroke-width: 3;
}

.edge {
    stroke: #1c1c1c;
    stroke-width: 3;
}

.axis-text {
    font: 12px "DejaVu Sans", sans-serif;
    text-anchor: middle;
}

/* Output tabs */
.output {
    display: flex;
    align-items: flex-end;
    gap: 8px;
    flex: none;
    height: 32px;
    padding: 0 4px 1px;
    border: 1px solid var(--line);
    color: #44484f;
}

.out-tab {
    display: flex;
    align-items: center;
    gap: 7px;
    height: 24px;
    padding: 0 3px;
    background: #ededef;
    color: var(--text);
    font-size: 13px;
}

.out-tab svg {
    width: 10px;
    height: 10px;
    margin-right: 3px;
}

.out-active {
    border: 1px solid var(--line);
    border-bottom: 0;
    background: var(--page-bg);
    color: var(--title);
}

.output .caret {
    margin: 0 0 10px auto;
}

.output .pin {
    margin-bottom: 7px;
}

/* Status bar */
.status {
    display: flex;
    align-items: center;
    flex: none;
    height: 35px;
}

.status span {
    margin: 5px 0 0 64%;
}
```
